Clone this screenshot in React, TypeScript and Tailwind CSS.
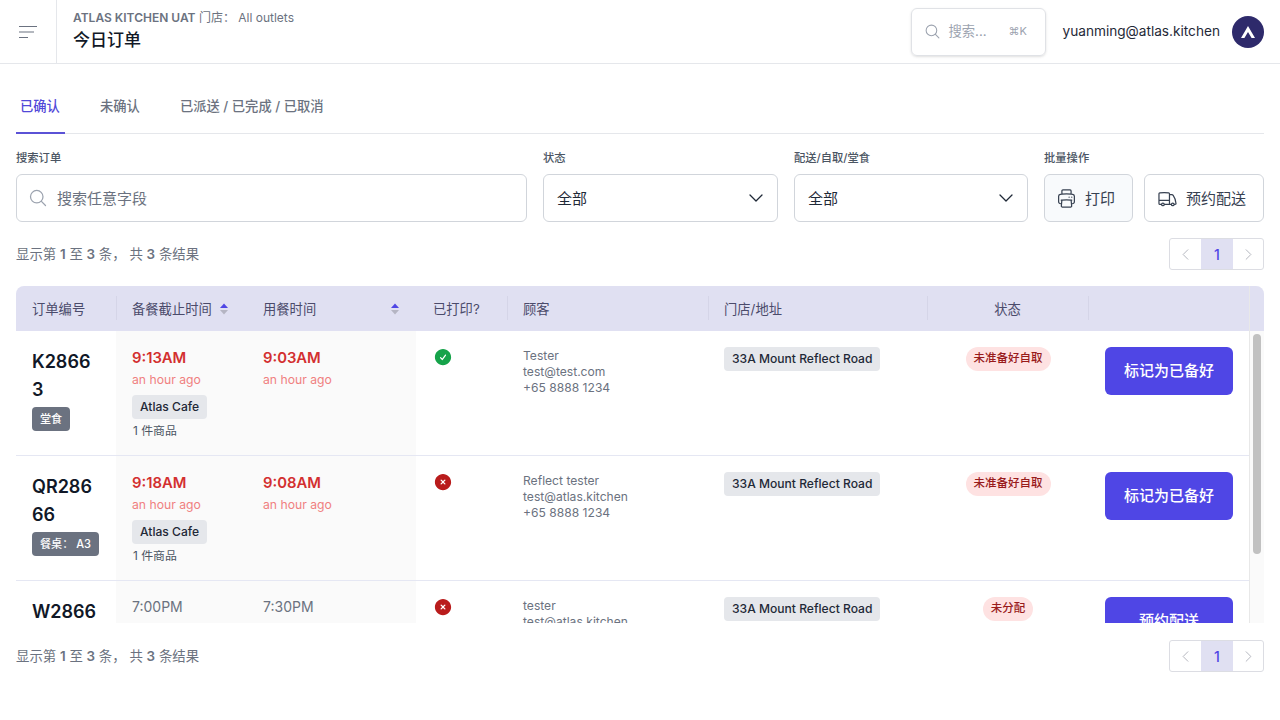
import React from 'react';
import { HiOutlineMagnifyingGlass, HiOutlinePrinter, HiOutlineTruck, HiCheckCircle, HiXCircle } from 'react-icons/hi2';
import { ChevronDown, ChevronLeft, ChevronRight } from 'lucide-react';

const cols = 'grid grid-cols-[100px_131px_169px_91px_201px_219px_161px_161px]';

const orders = [
  {
    id: 'K28663', tag: '堂食', late: true, prep: '9:13AM', dine: '9:03AM', printed: true,
    name: 'Tester', email: 'test@test.com', status: '未准备好自取', action: '标记为已备好',
  },
  {
    id: 'QR28666', tag: '餐桌： A3', late: true, prep: '9:18AM', dine: '9:08AM', printed: false,
    name: 'Reflect tester', email: 'test@atlas.kitchen', status: '未准备好自取', action: '标记为已备好',
  },
  {
    id: 'W28664', tag: '外送', late: false, prep: '7:00PM', dine: '7:30PM', printed: false,
    name: 'tester', email: 'test@atlas.kitchen', status: '未分配', action: '预约配送',
  },
];

const SortIcon = () => (
  <svg width="10" height="14" viewBox="0 0 10 14" className="shrink-0">
    <path d="M5 1.5 L9 6 H1 Z" fill="#4f46e5" />
    <path d="M5 12.5 L9 8 H1 Z" fill="#b5b5c3" />
  </svg>
);

const Pager = () => (
  <div className="flex h-8 rounded-[3px] border border-[#dcdde3] text-[#b4b6be]">
    <div className="flex w-[31px] items-center justify-center"><ChevronLeft size={19} strokeWidth={1.25} /></div>
    <div className="flex w-8 items-center justify-center bg-[#e0e0f2] text-[14px] font-medium text-[#4f46e5]">1</div>
    <div className="flex w-[30px] items-center justify-center"><ChevronRight size={19} strokeWidth={1.25} /></div>
  </div>
);

const ResultText = () => (
  <p className="text-[13.4px] text-[#6b7280]">
    显示第 <b className="font-semibold">1</b> 至 <b className="font-semibold">3</b> 条， 共 <b className="font-semibold">3</b> 条结果
  </p>
);

const Select = () => (
  <div className="flex h-12 items-center justify-between rounded-md border border-[#d1d5db] pr-[9px] pl-[13px] text-[15px] text-[#1f2937]">
    <span className="mt-0.5">全部</span>
    <ChevronDown size={24} strokeWidth={1.3} />
  </div>
);

const Label = ({ children }: { children: React.ReactNode }) => (
  <div className="mb-[11px] h-[9px] text-[11.3px] leading-[9px] font-medium text-[#4b5563]">{children}</div>
);

const Gray = ({ children }: { children: React.ReactNode }) => (
  <span className="flex h-6 items-center rounded-[4px] bg-[#e5e7eb] px-2 text-[12.1px] font-medium text-[#1f2937]">{children}</span>
);

const HeadCell = ({ children, line = true, className = '' }: { children?: React.ReactNode; line?: boolean; className?: string }) => (
  <div className={`relative flex items-center ${className}`}>
    {line && <div className="absolute top-2.5 left-0 h-6 w-px bg-[#d5d5e8]" />}
    {children}
  </div>
);

const Title = ({ children }: { children: React.ReactNode }) => <span className="mt-0.5">{children}</span>;

export default function App() {
  return (
    <div className="h-[720px] w-[1280px] overflow-hidden bg-white font-['Inter','Noto_Sans_CJK_SC',sans-serif]">
      <header className="flex h-16 items-center border-b border-[#e5e7eb]">
        <div className="flex h-full w-[57px] shrink-0 items-center justify-center border-r border-[#e5e7eb]">
          <svg width="20" height="16" viewBox="0 0 20 16" fill="none" stroke="#6b7280" strokeWidth="1.2">
            <path d="M1 2.5H19M1 8H16M1 13.5H10" />
          </svg>
        </div>
        <div className="flex-1 pb-0.5 pl-4">
          <div className="text-[12px] leading-4 text-[#6b7280]">
            <span className="font-semibold">ATLAS KITCHEN UAT</span> 门店： All outlets
          </div>
          <h1 className="mt-0.5 text-[17px] leading-6 font-medium text-[#111827]">今日订单</h1>
        </div>
        <div className="flex h-12 w-[135px] items-center rounded-md border border-[#e0e2e6] pl-3 shadow-sm">
          <HiOutlineMagnifyingGlass size={17} className="text-[#9ca3af]" />
          <span className="ml-[7px] text-[13.3px] text-[#9ca3af]">搜索...</span>
          <span className="ml-[22px] text-[11px] text-[#9ca3af]">⌘K</span>
        </div>
        <span className="ml-4 text-[13.65px] text-[#1f2937]">yuanming@atlas.kitchen</span>
        <div className="mr-4 ml-3 flex h-8 w-8 items-center justify-center rounded-full bg-[#2e2a6b]">
          <svg width="16" height="14" viewBox="0 0 16 14" fill="white">
            <path d="M8 1 L15 13 H11.6 L8 7 L4.4 13 H1 Z" />
          </svg>
        </div>
      </header>

      <main className="px-4">
        <nav className="flex h-[70px] items-end border-b border-[#e5e7eb] text-[13.3px] font-medium text-[#6b7280]">
          <div className="-mb-px h-[38px] w-[49px] border-b-2 border-[#5b52d6] pl-1 leading-5 text-[#5148d8]">已确认</div>
          <div className="ml-[35px] h-[37px] leading-5">未确认</div>
          <div className="ml-10 h-[37px] leading-5">已派送 / 已完成 / 已取消</div>
        </nav>

        <div className="mt-5 flex">
          <div className="w-[511px]">
            <Label>搜索订单</Label>
            <div className="flex h-12 items-center rounded-md border border-[#d1d5db] pl-[11px]">
              <HiOutlineMagnifyingGlass size={20} className="text-[#9ca3af]" />
              <span className="mt-0.5 ml-[9px] text-[15px] text-[#6b7280]">搜索任意字段</span>
            </div>
          </div>
          <div className="ml-4 w-[235px]">
            <Label>状态</Label>
            <Select />
          </div>
          <div className="ml-4 w-[234px]">
            <Label>配送/自取/堂食</Label>
            <Select />
          </div>
          <div className="ml-4 flex-1">
            <Label>批量操作</Label>
            <div className="flex justify-between">
              <div className="flex h-12 w-[89px] items-center gap-2 rounded-md border border-[#d1d5db] bg-[#f8fafc] pl-[11px] text-[15px] text-[#374151]">
                <HiOutlinePrinter size={21} strokeWidth={1.4} /><span className="mt-0.5">打印</span>
              </div>
              <div className="flex h-12 w-[120px] items-center gap-2 rounded-md border border-[#d1d5db] pl-3 text-[15px] text-[#374151]">
                <HiOutlineTruck size={21} strokeWidth={1.4} /><span className="mt-0.5">预约配送</span>
              </div>
            </div>
          </div>
        </div>

        <div className="mt-4 flex h-8 items-center justify-between"><ResultText /><Pager /></div>

        <div className="mt-4 flex h-[337px] overflow-hidden rounded-t-lg">
          <div className="w-[1233px] shrink-0">
            <div className={`${cols} h-[45px] bg-[#e0e0f2] text-[13.3px] text-[#4b4b6b]`}>
              <HeadCell line={false} className="pl-4"><Title>订单编号</Title></HeadCell>
              <HeadCell className="pl-4"><Title>备餐截止时间</Title><span className="ml-[7px]"><SortIcon /></span></HeadCell>
              <HeadCell line={false} className="justify-between pr-4 pl-4"><Title>用餐时间</Title><SortIcon /></HeadCell>
              <HeadCell line={false} className="pl-[17px]"><Title>已打印?</Title></HeadCell>
              <HeadCell className="pl-4"><Title>顾客</Title></HeadCell>
              <HeadCell className="pl-4"><Title>门店/地址</Title></HeadCell>
              <HeadCell className="justify-center"><Title>状态</Title></HeadCell>
              <HeadCell />
            </div>
            {orders.map((o) => (
              <div key={o.id} className={`${cols} h-[125px] border-b border-[#e5e7f3]`}>
                <div className="pt-[17px] pl-4">
                  <div className="w-[68px] text-[18px] leading-7 font-semibold break-all text-[#111827]">{o.id}</div>
                  <div className="mt-[3px] flex">
                    <span className="flex h-6 items-center rounded-[4px] bg-[#6b7280] px-2 text-[11.1px] font-medium whitespace-nowrap text-white">{o.tag}</span>
                  </div>
                </div>
                <div className="col-span-2 flex bg-[#fafafa] pt-[17px] pl-4">
                  <div className="w-[131px]">
                    <div className={`leading-5 ${o.late ? 'text-[14.8px] font-semibold text-[#d32f2f]' : '-mt-px mb-px text-[14px] text-[#6b7280]'}`}>{o.prep}</div>
                    <div className={`mt-0.5 text-[12.2px] leading-5 ${o.late ? 'text-[#f08080]' : 'text-[#9ca3af]'}`}>an hour ago</div>
                    <div className="mt-[5px] flex"><Gray>Atlas Cafe</Gray></div>
                    <div className="mt-1 pl-px text-[11.9px] leading-4 text-[#4b5563]">1 件商品</div>
                  </div>
                  <div>
                    <div className={`leading-5 ${o.late ? 'text-[14.8px] font-semibold text-[#d32f2f]' : '-mt-px mb-px text-[14px] text-[#6b7280]'}`}>{o.dine}</div>
                    <div className={`mt-0.5 text-[12.2px] leading-5 ${o.late ? 'text-[#f08080]' : 'text-[#9ca3af]'}`}>an hour ago</div>
                  </div>
                </div>
                <div className="pt-4 pl-[17px]">
                  {o.printed ? <HiCheckCircle size={20} className="text-[#16a34a]" /> : <HiXCircle size={20} className="text-[#b91c1c]" />}
                </div>
                <div className="pt-[17px] pl-4 text-[12.1px] leading-4 text-[#6b7280]">
                  <div>{o.name}</div>
                  <div>{o.email}</div>
                  <div>+65 8888 1234</div>
                </div>
                <div className="flex items-start pt-4 pl-4"><Gray>33A Mount Reflect Road</Gray></div>
                <div className="flex items-start justify-center pt-4 pl-px">
                  <span className="flex h-6 items-center rounded-full bg-[#fee2e2] px-2 text-[11.5px] font-medium text-[#991b1b]">{o.status}</span>
                </div>
                <div className="pt-4 pl-[17px]">
                  <div className="flex h-12 w-32 items-center justify-center rounded-md bg-[#4f46e5] text-[15px] font-medium text-white">{o.action}</div>
                </div>
              </div>
            ))}
          </div>
          <div className="flex-1 border-l border-[#e8e8e8] bg-[#fafafa]">
            <div className="h-[45px] bg-[#e0e0f2]" />
            <div className="mx-auto mt-[3px] h-[220px] w-2 rounded-full bg-[#c1c1c1]" />
          </div>
        </div>

        <div className="mt-[17px] flex h-8 items-center justify-between"><ResultText /><Pager /></div>
      </main>
    </div>
  );
}
